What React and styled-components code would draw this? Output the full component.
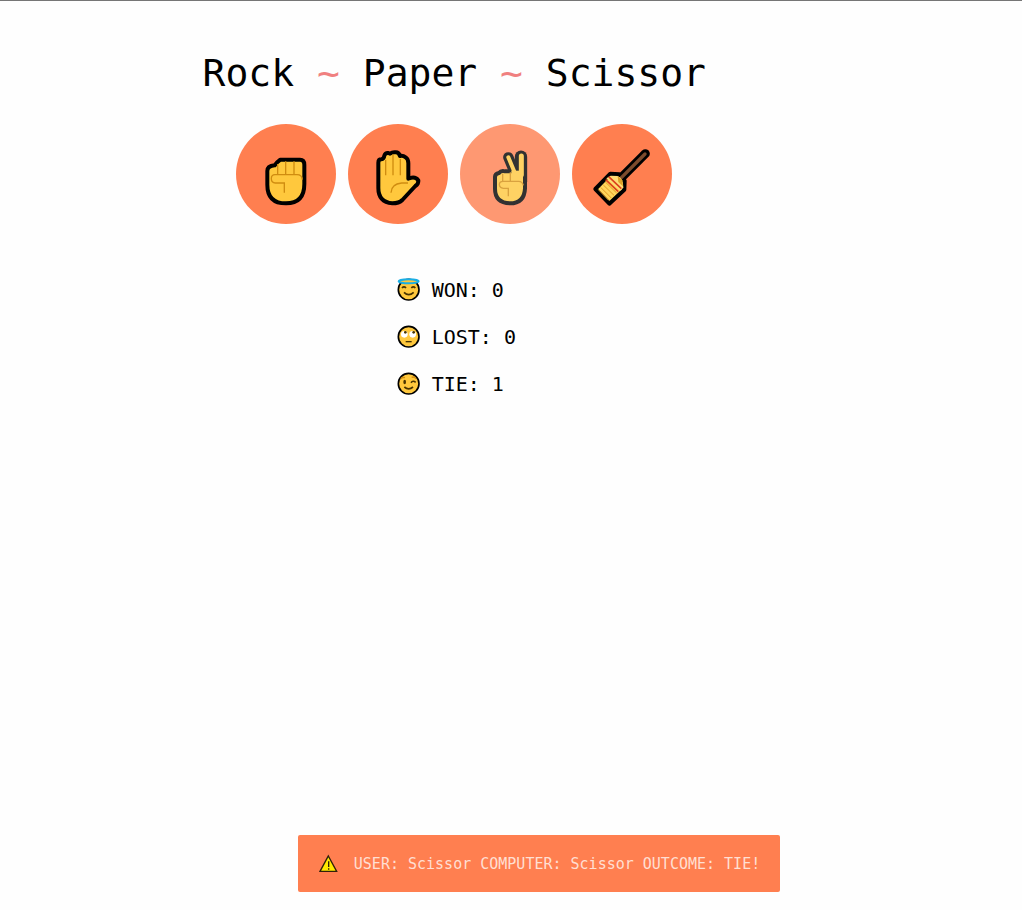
import React, { useState } from "react";
import styled, { createGlobalStyle } from "styled-components";

const GlobalStyle = createGlobalStyle`
  *, *::before, *::after { box-sizing: border-box; }
  body {
    margin: 0;
    background: #fefefe;
    color: #000;
    font-family: "Lucida Console", "DejaVu Sans Mono", monospace;
  }
`;

const Page = styled.div`
  display: flex;
  flex-direction: column;
  min-height: 100vh;
  border-top: 1px solid #767676;
`;

const Game = styled.main`
  flex: 1;
  display: flex;
  flex-direction: column;
  align-items: center;
  padding: 48px 11.1% 24px 0;
`;

const Title = styled.h1`
  margin: 0 0 27px;
  font-size: 38px;
  line-height: 48px;
  font-weight: 400;
  text-align: center;
`;

const Tilde = styled.span`
  color: lightcoral;
`;

const Choices = styled.div`
  display: flex;
  flex-wrap: wrap;
  justify-content: center;
  gap: 12px;
  margin-bottom: 42px;
`;

const Choice = styled.button`
  width: 100px;
  height: 100px;
  padding: 0;
  border: 0;
  border-radius: 50%;
  background: coral;
  opacity: ${({ $picked }) => ($picked ? 0.8 : 1)};
  cursor: pointer;
`;

const Drawing = styled.svg`
  display: block;
  flex: none;
  width: ${({ $size }) => $size}px;
  height: ${({ $size }) => $size}px;
`;

const Scores = styled.ul`
  margin: 0;
  padding: 0 0 0 4px;
  list-style: none;
`;

const Score = styled.li`
  display: flex;
  align-items: center;
  gap: 12px;
  height: 47px;
  font-size: 20px;
  line-height: 24px;
`;

const ToastArea = styled.div`
  display: flex;
  justify-content: center;
  padding: 0 0 18px 56px;
`;

const Toast = styled.output`
  display: flex;
  align-items: center;
  gap: 16px;
  min-height: 57px;
  padding: 0 20px 0 21px;
  border-radius: 2px;
  background: coral;
  color: rgba(255, 255, 255, 0.75);
  font-size: 15px;
  line-height: 20px;
`;

const skin = "#ffc83d";
const crease = "#d08c10";

function Rock() {
  return (
    <Drawing $size={100} viewBox="18 18 300 300" aria-hidden="true">
      <path d="M151 125H210Q223 125 223 140V198Q223 256 168 256Q112 256 112 200V159Q112 144 134 142Q139 134 151 125Z" fill={skin} stroke="#000" strokeWidth="12" strokeLinejoin="round" />
      <path d="M143 138V170M167 130V170M192 130V170M217 185Q216 170 201 170H135Q124 170 124 182Q124 194 136 195H163V224" fill="none" stroke={crease} strokeWidth="4" />
    </Drawing>
  );
}

function Paper() {
  return (
    <Drawing $size={100} viewBox="18 18 300 300" aria-hidden="true">
      <path d="M109 134Q109 124 118 124Q126 123 127 113Q130 104 139 105L144 107Q151 102 160 103Q170 102 174 114Q183 112 191 118Q199 123 199 136V182L209 179Q222 177 229 187Q230 197 220 204L181 246Q171 256 151 256Q109 252 109 210Z" fill={skin} stroke="#000" strokeWidth="12" strokeLinejoin="round" />
      <path d="M131 125V172M153 109V172M175 123V172M198 195H179Q148 198 147 224" fill="none" stroke={crease} strokeWidth="4" />
    </Drawing>
  );
}

function Scissor() {
  return (
    <Drawing $size={100} viewBox="18 18 300 300" aria-hidden="true">
      <path d="M163 118L183 166" stroke="#000" strokeWidth="31" strokeLinecap="round" />
      <path d="M201 116V190" stroke="#000" strokeWidth="37" strokeLinecap="round" />
      <path d="M123 177Q123 167 135 165Q141 157 153 160H213V211Q211 256 168 256Q123 254 123 212Z" fill={skin} stroke="#000" strokeWidth="12" strokeLinejoin="round" />
      <path d="M163 118L183 166" stroke={skin} strokeWidth="12" strokeLinecap="round" />
      <path d="M202 114V170" stroke={skin} strokeWidth="15" strokeLinecap="round" />
      <path d="M172 158H207V195H172Z" fill={skin} />
      <path d="M146 167V190M169 163V190M208 202Q205 190 194 190H147Q136 190 136 200Q137 210 148 211H163V235" fill="none" stroke={crease} strokeWidth="4" />
    </Drawing>
  );
}

function Broom() {
  return (
    <Drawing $size={100} viewBox="18 18 300 300" aria-hidden="true">
      <path d="M88 213L130 257L175 215L176 188L160 169L133 167Z" fill="#ffd55c" stroke="#000" strokeWidth="12" strokeLinejoin="round" />
      <path d="M164 181L238 107" stroke="#000" strokeWidth="27" strokeLinecap="round" />
      <path d="M164 181L237 108" stroke="#7d4b2d" strokeWidth="10" strokeLinecap="round" />
      <path d="M134 173L155 174Q172 181 172 208L164 218L121 181Z" fill="#ffdc75" />
      <path d="M155 174L169 187L171 205L157 192Z" fill="#dca127" />
      <path d="M97 215L128 247M104 208L136 240M112 201L144 232M118 192L152 225" fill="none" stroke="#e29a24" strokeWidth="3" />
      <path d="M119 185L157 221M128 176L166 212" stroke="#dc401d" strokeWidth="5" />
    </Drawing>
  );
}

function Face({ children, label }) {
  return (
    <Drawing $size={23} viewBox="32 26 69 69" role="img" aria-label={label}>
      <circle cx="67" cy="61" r="31" fill={skin} stroke="#000" strokeWidth="5" />
      {children}
    </Drawing>
  );
}

function HaloFace() {
  return (
    <Face label="Smiling face with halo">
      <ellipse cx="67" cy="36" rx="30" ry="6" fill={skin} stroke="#19aee5" strokeWidth="6" />
      <path d="M47 56Q53 49 59 56M75 56Q81 49 87 56M53 69Q67 83 82 69" fill="none" stroke="#493400" strokeWidth="5" />
    </Face>
  );
}

function RollingFace() {
  return (
    <Face label="Face with rolling eyes">
      <circle cx="54" cy="54" r="10" fill="#fff" />
      <circle cx="79" cy="54" r="10" fill="#fff" />
      <circle cx="57" cy="48" r="4" fill="#493400" />
      <circle cx="82" cy="48" r="4" fill="#493400" />
      <path d="M58 76H76" stroke="#493400" strokeWidth="4" />
    </Face>
  );
}

function WinkFace() {
  return (
    <Face label="Winking face">
      <path d="M43 46Q48 41 56 43M76 42Q84 39 89 46" fill="none" stroke={crease} strokeWidth="4" />
      <ellipse cx="55" cy="56" rx="4" ry="7" fill="#493400" />
      <path d="M74 58Q80 50 88 57M54 71Q67 82 80 71" fill="none" stroke="#493400" strokeWidth="5" />
    </Face>
  );
}

function Warning() {
  return (
    <Drawing $size={19} viewBox="90 85 57 57" aria-hidden="true">
      <path d="M118 91L143 137H93Z" fill="#ffe800" stroke="#30200a" strokeWidth="4" />
      <path d="M119 107V124M119 128V132" stroke="#30200a" strokeWidth="4" />
    </Drawing>
  );
}

const choices = [
  { name: "Rock", Icon: Rock },
  { name: "Paper", Icon: Paper },
  { name: "Scissor", Icon: Scissor },
];

const beats = { Rock: "Scissor", Paper: "Rock", Scissor: "Paper" };
const opening = { won: 0, lost: 0, tie: 1, user: "Scissor", computer: "Scissor", outcome: "TIE!" };

export default function App() {
  const [game, setGame] = useState(opening);

  const play = (user) => {
    const computer = choices[Math.floor(Math.random() * 3)].name;
    const key = user === computer ? "tie" : beats[user] === computer ? "won" : "lost";
    setGame({ ...game, [key]: game[key] + 1, user, computer, outcome: `${key.toUpperCase()}!` });
  };

  const reset = () => setGame({ ...game, won: 0, lost: 0, tie: 0, user: null });

  return (
    <>
      <GlobalStyle />
      <Page>
        <Game>
          <Title>
            Rock <Tilde>~</Tilde> Paper <Tilde>~</Tilde> Scissor
          </Title>
          <Choices>
            {choices.map(({ name, Icon }) => (
              <Choice key={name} type="button" aria-label={name} $picked={game.user === name} onClick={() => play(name)}>
                <Icon />
              </Choice>
            ))}
            <Choice type="button" aria-label="Clear scores" onClick={reset}>
              <Broom />
            </Choice>
          </Choices>
          <Scores>
            <Score><HaloFace /><span>WON: {game.won}</span></Score>
            <Score><RollingFace /><span>LOST: {game.lost}</span></Score>
            <Score><WinkFace /><span>TIE: {game.tie}</span></Score>
          </Scores>
        </Game>
        {game.user && (
          <ToastArea>
            <Toast>
              <Warning />
              <span>USER: {game.user} COMPUTER: {game.computer} OUTCOME: {game.outcome}</span>
            </Toast>
          </ToastArea>
        )}
      </Page>
    </>
  );
}
